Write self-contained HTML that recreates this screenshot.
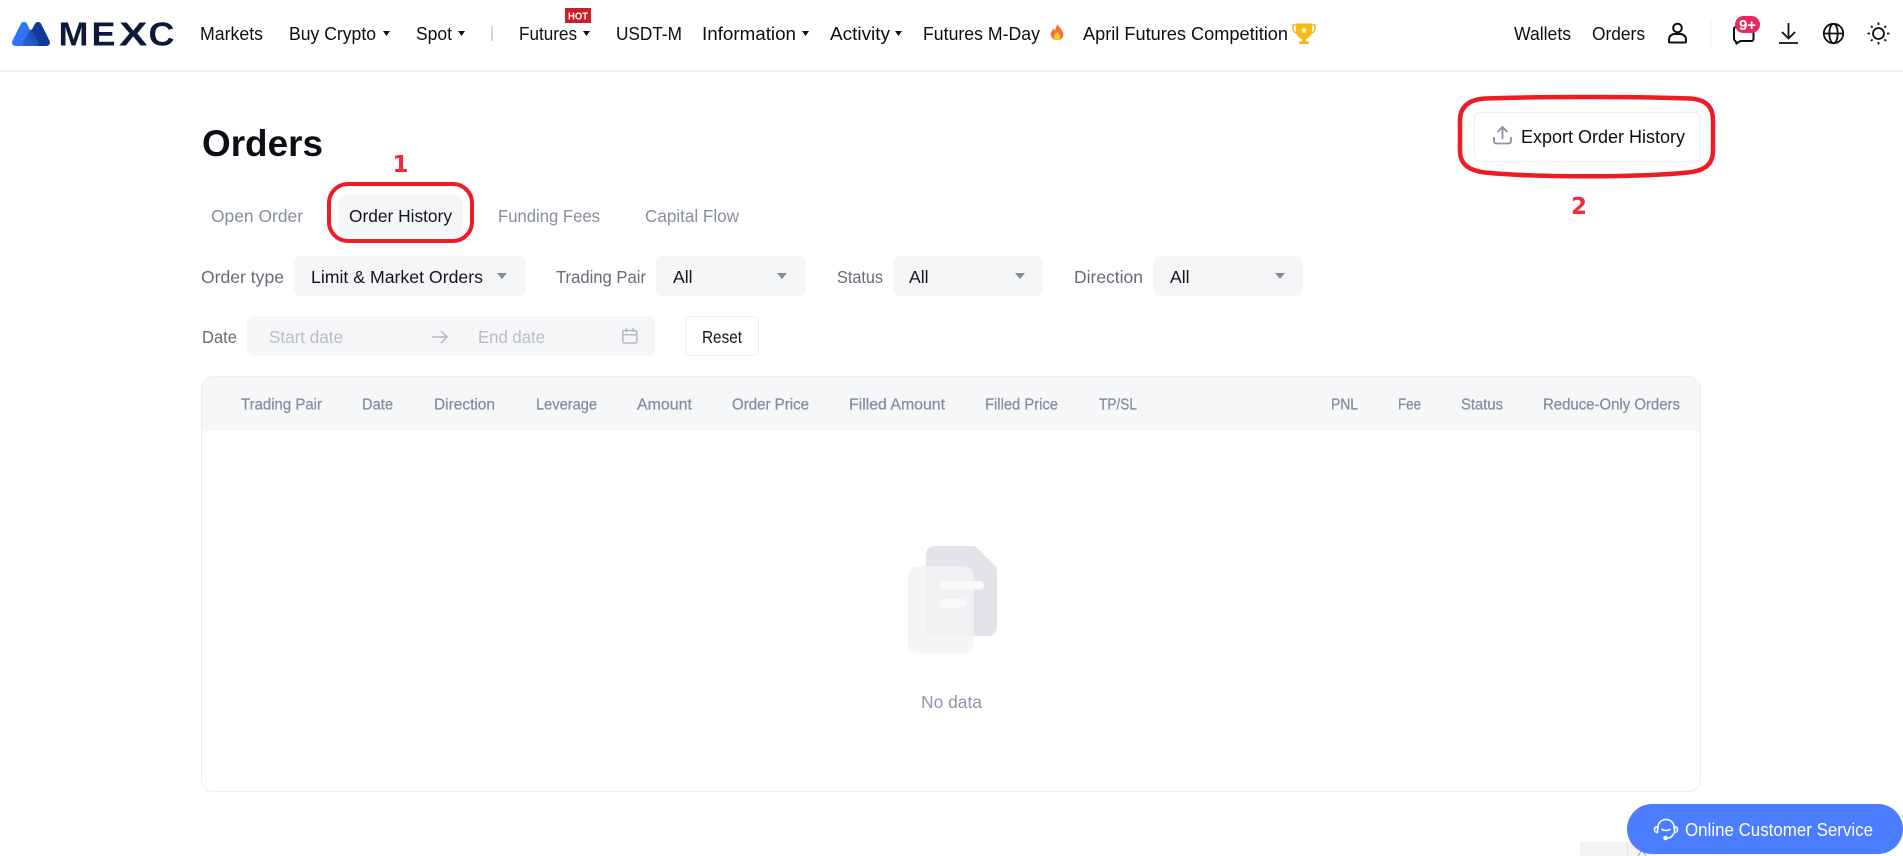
<!DOCTYPE html>
<html lang="en">
<head>
<meta charset="utf-8">
<title>Orders</title>
<style>
html,body{margin:0;padding:0;background:#fff;width:1903px;height:856px;overflow:hidden}
svg{display:block}
text{font-family:"Liberation Sans",Arial,sans-serif;white-space:pre}
.n{font-size:18px;fill:#0b0e14}
.t{font-size:17.6px;fill:#868d9f}
.l{font-size:17.6px;fill:#666b78}
.v{font-size:17.6px;fill:#12151c}
.p{font-size:17.6px;fill:#b9bdc9}
.h{font-size:15.5px;fill:#868da2;stroke:#868da2;stroke-width:.25}
.m{font-size:33px;font-weight:700;fill:#0b1a38}
</style>
</head>
<body>
<svg width="1903" height="856" viewBox="0 0 1903 856" xmlns="http://www.w3.org/2000/svg">
<defs>
<linearGradient id="g3" x1="0" y1="1" x2="1" y2="0"><stop offset="0" stop-color="#2d66da"/><stop offset="1" stop-color="#153f9e"/></linearGradient>
</defs>

<!-- header -->
<rect x="0" y="70" width="1903" height="2" fill="#eceef3"/>
<polygon points="15.5,42.5 24,25.5 32,42.5" fill="#2f74f5" stroke="#2f74f5" stroke-width="7" stroke-linejoin="round"/>
<polygon points="29,42.5 38,25.5 46.5,42.5" fill="#0f3a9c" stroke="#0f3a9c" stroke-width="7" stroke-linejoin="round"/>
<path d="M31 29 38.500 42c1.200 2.500 0 4-2.500 4H26c-3 0-4.500-1.500-3.500-4z" fill="url(#g3)"/>
<text class="m" x="58.500" y="45.500" textLength="30" lengthAdjust="spacingAndGlyphs">M</text>
<text class="m" x="91.500" y="45.500" textLength="24" lengthAdjust="spacingAndGlyphs">E</text>
<text class="m" x="119" y="45.500" textLength="28.500" lengthAdjust="spacingAndGlyphs">X</text>
<text class="m" x="148.500" y="45.500" textLength="26" lengthAdjust="spacingAndGlyphs">C</text>

<text class="n" x="200" y="40" textLength="63" lengthAdjust="spacingAndGlyphs">Markets</text>
<text class="n" x="289" y="40" textLength="87" lengthAdjust="spacingAndGlyphs">Buy Crypto</text>
<path d="M383 31h7l-3.500 5z" fill="#111"/>
<text class="n" x="416" y="40" textLength="36" lengthAdjust="spacingAndGlyphs">Spot</text>
<path d="M458 31h7l-3.500 5z" fill="#111"/>
<rect x="491.500" y="26" width="1.200" height="15" fill="#b9bdc7"/>
<text class="n" x="519" y="40" textLength="58" lengthAdjust="spacingAndGlyphs">Futures</text>
<path d="M583 31h7l-3.500 5z" fill="#111"/>
<rect x="565" y="8" width="26" height="15" fill="#c8202b"/>
<text x="578" y="19.500" font-size="10.500" font-weight="700" fill="#fff" text-anchor="middle" textLength="20" lengthAdjust="spacingAndGlyphs">HOT</text>
<text class="n" x="616" y="40" textLength="66" lengthAdjust="spacingAndGlyphs">USDT-M</text>
<text class="n" x="702" y="40" textLength="94" lengthAdjust="spacingAndGlyphs">Information</text>
<path d="M802 31h7l-3.500 5z" fill="#111"/>
<text class="n" x="830" y="40" textLength="60" lengthAdjust="spacingAndGlyphs">Activity</text>
<path d="M895 31h7l-3.500 5z" fill="#111"/>
<text class="n" x="923" y="40" textLength="117" lengthAdjust="spacingAndGlyphs">Futures M-Day</text>
<path d="M1057.500 24c.6 3 5.900 5.600 5.900 10.500 0 3.400-2.700 5.500-6.300 5.500s-6.400-2.300-6.400-5.600c0-2.700 1.700-4 2.800-6 .5 1 .9 1.700 1.600 2.100.6-2.200 1.300-4.300 2.400-6.500z" fill="#f0722c"/>
<path d="M1057.200 31.500c.5 1.700 3 2.800 3 5.200 0 2-1.400 3.300-3.200 3.300s-3.200-1.300-3.200-3.100c0-2.300 2.400-3.400 3.400-5.400z" fill="#fbc531"/>
<text class="n" x="1083" y="40" textLength="205" lengthAdjust="spacingAndGlyphs">April Futures Competition</text>
<path d="M1296 23.500h16v7c0 5-3.500 8-6 8.500v2.500h3v2.500h-10v-2.500h3V39c-2.500-.5-6-3.500-6-8.500z" fill="#f3bb16"/>
<path d="M1296 25h-3v3.500c0 2.500 1.500 4 4 5M1312 25h3v3.500c0 2.500-1.500 4-4 5" fill="none" stroke="#f3bb16" stroke-width="1.500"/>
<path d="m1304 26.500 1 2.400 2.500.2-1.900 1.700.6 2.500-2.200-1.300-2.200 1.300.6-2.500-1.900-1.700 2.500-.2z" fill="#fff3c0"/>

<text class="n" x="1514" y="40" textLength="57" lengthAdjust="spacingAndGlyphs">Wallets</text>
<text class="n" x="1592" y="40" textLength="53" lengthAdjust="spacingAndGlyphs">Orders</text>
<g fill="none" stroke="#0d0f14" stroke-width="2">
<circle cx="1677.500" cy="28" r="4.300"/>
<path d="M1669 41.500v-2c0-3 2.500-5.500 5.500-5.500h6c3 0 5.500 2.500 5.500 5.500v2c0 .6-.4 1-1 1h-15c-.6 0-1-.4-1-1z"/>
</g>
<rect x="1710.500" y="18" width="1" height="30" fill="#eceef2"/>
<path d="M1736 27h15.500c1.200 0 2 .8 2 2v10c0 1.200-.8 2-2 2h-11l-4 2.500-.8-2.500H1736c-1.200 0-2-.8-2-2V29c0-1.200.8-2 2-2z" fill="none" stroke="#0d0f14" stroke-width="2"/>
<rect x="1735" y="16" width="25" height="17" rx="8.500" fill="#e8285f"/>
<text x="1747.500" y="30" font-size="15" font-weight="700" fill="#fff" text-anchor="middle">9+</text>
<g fill="none" stroke="#0d0f14" stroke-width="1.800">
<path d="M1788.500 23v15M1782 32l6.500 6.500 6.500-6.500M1779 43h19"/>
<circle cx="1833.500" cy="33.500" r="9.700"/>
<ellipse cx="1833.500" cy="33.500" rx="4.200" ry="9.700"/>
<path d="M1824 33.500h19"/>
<circle cx="1878.500" cy="33.500" r="5.500"/>
<path d="M1878.500 22.500v2.500M1878.500 42v2.500M1867.500 33.500h2.500M1887 33.500h2.500M1871 26l1.600 1.600M1884.400 39.400l1.600 1.600M1871 41l1.600-1.600M1884.400 27.600l1.600-1.600"/>
</g>

<!-- title -->
<text x="202" y="156" font-size="37" font-weight="700" fill="#0b0e14" textLength="121" lengthAdjust="spacingAndGlyphs">Orders</text>

<!-- export -->
<rect x="1474.500" y="112.500" width="226" height="49" rx="5" fill="#fff" stroke="#eceef2"/>
<path d="M1502.500 127.500v11.500M1497.500 132l5-5 5 5M1494 137v4c0 1.500 1 2.500 2.500 2.500h12c1.500 0 2.500-1 2.500-2.500v-4" fill="none" stroke="#8a91a5" stroke-width="1.800"/>
<text x="1521" y="143" font-size="18px" fill="#0b0e14" textLength="164" lengthAdjust="spacingAndGlyphs">Export Order History</text>
<path d="M1485 98.500c50-2 155-2 205 0 16 1 23 8 23 22v30c0 14-8 20-25 22-50 5-155 5-203 0-16-2-25-8-25-22v-30c0-14 9-21 25-22z" fill="none" stroke="#ed1c24" stroke-width="4.500"/>
<text x="1579" y="214" font-size="23" font-weight="700" fill="#ee2a3c" style="font-family:'DejaVu Sans',sans-serif" text-anchor="middle">2</text>

<!-- tabs -->
<text x="400.500" y="172" font-size="23" font-weight="700" fill="#ee2a3c" style="font-family:'DejaVu Sans',sans-serif" text-anchor="middle">1</text>
<text class="t" x="211" y="222" textLength="92" lengthAdjust="spacingAndGlyphs">Open Order</text>
<rect x="338" y="195" width="125" height="40" rx="8" fill="#f5f6f8"/>
<text class="v" x="349" y="222" textLength="103" lengthAdjust="spacingAndGlyphs">Order History</text>
<rect x="329" y="184" width="143" height="57" rx="19" fill="none" stroke="#ed1c24" stroke-width="4"/>
<text class="t" x="498" y="222" textLength="102" lengthAdjust="spacingAndGlyphs">Funding Fees</text>
<text class="t" x="645" y="222" textLength="94" lengthAdjust="spacingAndGlyphs">Capital Flow</text>

<!-- filters -->
<text class="l" x="201" y="283" textLength="83" lengthAdjust="spacingAndGlyphs">Order type</text>
<rect x="294" y="256" width="232" height="40" rx="7" fill="#f5f6f8"/>
<text class="v" x="311" y="283" textLength="172" lengthAdjust="spacingAndGlyphs">Limit &amp; Market Orders</text>
<path d="M497 273h10l-5 6z" fill="#868b99"/>
<text class="l" x="556" y="283" textLength="90" lengthAdjust="spacingAndGlyphs">Trading Pair</text>
<rect x="656" y="256" width="150" height="40" rx="7" fill="#f5f6f8"/>
<text class="v" x="673" y="283">All</text>
<path d="M777 273h10l-5 6z" fill="#868b99"/>
<text class="l" x="837" y="283" textLength="46" lengthAdjust="spacingAndGlyphs">Status</text>
<rect x="893" y="256" width="150" height="40" rx="7" fill="#f5f6f8"/>
<text class="v" x="909" y="283">All</text>
<path d="M1015 273h10l-5 6z" fill="#868b99"/>
<text class="l" x="1074" y="283" textLength="69" lengthAdjust="spacingAndGlyphs">Direction</text>
<rect x="1153" y="256" width="150" height="40" rx="7" fill="#f5f6f8"/>
<text class="v" x="1170" y="283">All</text>
<path d="M1275 273h10l-5 6z" fill="#868b99"/>

<!-- date -->
<text class="l" x="202" y="343" textLength="35" lengthAdjust="spacingAndGlyphs">Date</text>
<rect x="247" y="316" width="408" height="40" rx="7" fill="#f5f6f8"/>
<text class="p" x="269" y="343" textLength="74" lengthAdjust="spacingAndGlyphs">Start date</text>
<path d="M432 337h15M441 331l6 6-6 6" fill="none" stroke="#b5b9c5" stroke-width="1.500"/>
<text class="p" x="478" y="343" textLength="67" lengthAdjust="spacingAndGlyphs">End date</text>
<g fill="none" stroke="#b5b9c5" stroke-width="1.500">
<rect x="622.800" y="330.500" width="14" height="12.500" rx="1.500"/>
<path d="M622.800 334.800h14M626.500 328v4M633 328v4"/>
</g>
<rect x="685.500" y="316.500" width="73" height="39" rx="5" fill="#fff" stroke="#eceef2"/>
<text class="v" x="702" y="343" textLength="40" lengthAdjust="spacingAndGlyphs">Reset</text>

<!-- table -->
<rect x="201.500" y="376.500" width="1499" height="415" rx="12" fill="#fff" stroke="#eceef2"/>
<path d="M202 431V389c0-7 5-12 12-12h1475c7 0 11 5 11 12v42z" fill="#f6f7f9"/>
<text class="h" x="241" y="409.500" textLength="81" lengthAdjust="spacingAndGlyphs">Trading Pair</text>
<text class="h" x="362" y="409.500" textLength="31" lengthAdjust="spacingAndGlyphs">Date</text>
<text class="h" x="434" y="409.500" textLength="61" lengthAdjust="spacingAndGlyphs">Direction</text>
<text class="h" x="536" y="409.500" textLength="61" lengthAdjust="spacingAndGlyphs">Leverage</text>
<text class="h" x="637" y="409.500" textLength="55" lengthAdjust="spacingAndGlyphs">Amount</text>
<text class="h" x="732" y="409.500" textLength="77" lengthAdjust="spacingAndGlyphs">Order Price</text>
<text class="h" x="849" y="409.500" textLength="96" lengthAdjust="spacingAndGlyphs">Filled Amount</text>
<text class="h" x="985" y="409.500" textLength="73" lengthAdjust="spacingAndGlyphs">Filled Price</text>
<text class="h" x="1099" y="409.500" textLength="38" lengthAdjust="spacingAndGlyphs">TP/SL</text>
<text class="h" x="1331" y="409.500" textLength="27" lengthAdjust="spacingAndGlyphs">PNL</text>
<text class="h" x="1398" y="409.500" textLength="23" lengthAdjust="spacingAndGlyphs">Fee</text>
<text class="h" x="1461" y="409.500" textLength="42" lengthAdjust="spacingAndGlyphs">Status</text>
<text class="h" x="1543" y="409.500" textLength="137" lengthAdjust="spacingAndGlyphs">Reduce-Only Orders</text>

<!-- empty -->
<path d="M934 546h39c1.500 0 2.500.5 3.500 1.500l19 19c1 1 1.500 2 1.500 3.500v57c0 5-4 9-9 9h-54c-4.500 0-8-4-8-9V554c0-4.500 3.500-8 8-8z" fill="#e3e3e9"/>
<rect x="908" y="566" width="66" height="87" rx="10" fill="#f3f3f6" fill-opacity=".85"/>
<rect x="939" y="581" width="45" height="8.500" rx="4.200" fill="#fafafc"/>
<rect x="939" y="599" width="28" height="8.500" rx="4.200" fill="#fafafc"/>
<text x="921" y="708" font-size="17.6px" fill="#8e95a8" textLength="61" lengthAdjust="spacingAndGlyphs">No data</text>

<!-- floating -->
<rect x="1580" y="842" width="76" height="14" fill="#f3f3f4"/>
<rect x="1627" y="842" width="1" height="14" fill="#e4e4e6"/>
<path d="M1638 856l4-6 4 6" fill="none" stroke="#9a9a9a"/>
<rect x="1627" y="804" width="276" height="50" rx="25" fill="#4a7dff"/>
<g fill="none" stroke="#fff" stroke-width="1.500">
<path d="M1658 829v-2c0-4.500 3.800-7.500 8-7.500s8 3 8 7.500v2"/>
<path d="M1657.500 826.500c-1.800.2-3 1.300-3 3s1.200 3 3 3zM1674.500 826.500c1.800.2 3 1.300 3 3s-1.200 3-3 3z"/>
<path d="M1661.500 829c2.500 2 6.500 2 9 0M1674 833c-1 3-3.500 5-6 5"/>
</g>
<circle cx="1665.500" cy="838" r="2.300" fill="#fff"/>
<text x="1685" y="836" font-size="18px" fill="#fff" textLength="188" lengthAdjust="spacingAndGlyphs">Online Customer Service</text>
</svg>
</body>
</html>
